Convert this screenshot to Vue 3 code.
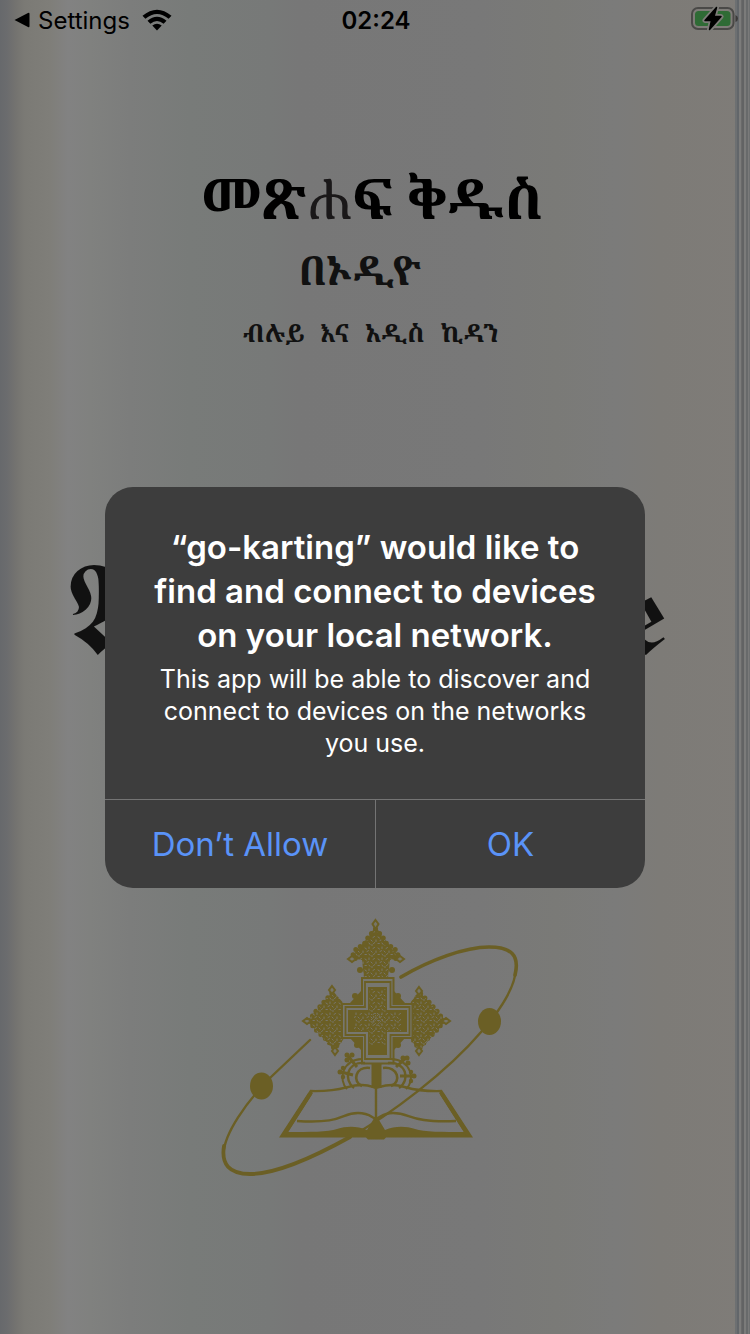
<script setup>
import { ref } from 'vue'

const open = ref(true)
</script>

<template>
  <div class="screen">
    <header class="status">
      <a class="back" href="#settings">
        <svg class="caret" viewBox="0 0 16 16" aria-hidden="true"><path d="M0.500 8 L14 1 Q15.500 0.300 15.500 2 V14 Q15.500 15.700 14 15 Z" /></svg>
        <span>Settings</span>
        <svg class="wifi" viewBox="0 0 30 22" aria-hidden="true">
          <path d="M0.500 6.800 Q15 -5.500 29.500 6.800 L26.600 9.800 Q15 0.300 3.400 9.800 Z" />
          <path d="M5.500 11.800 Q15 3.800 24.500 11.800 L21.600 14.800 Q15 9.300 8.400 14.800 Z" />
          <path d="M10.300 16.600 Q15 12.700 19.700 16.600 L15 21.500 Z" />
        </svg>
      </a>
      <time class="clock">02:24</time>
      <svg class="battery" viewBox="0 0 48 28" role="img" aria-label="Charging">
        <rect x="2" y="2" width="41.500" height="21" rx="6" fill="none" stroke="#4a4947" stroke-width="2" />
        <rect x="5" y="5" width="35.500" height="15" rx="3.500" fill="#2f6b35" />
        <path d="M45.500 9 Q48 10 48 12.500 Q48 15 45.500 16 Z" fill="#3c3b3a" />
        <path d="M26.500 1.500 L15 14.500 H21.500 L19.500 23.500 L31 10.500 H24 Z" fill="#000" stroke="#7d7c78" stroke-width="5" stroke-linejoin="round" />
        <path d="M26.500 1.500 L15 14.500 H21.500 L19.500 23.500 L31 10.500 H24 Z" fill="#000" stroke="#000" stroke-width="1.500" stroke-linejoin="round" />
      </svg>
    </header>

    <main class="cover">
      <h1 class="title">መጽ<span class="thin">ሐ</span>ፍ ቅዱስ</h1>
      <p class="subtitle">በኦዲዮ</p>
      <p class="testaments"><span>ብሉይ</span> <span>እና</span> <span>አዲስ</span> <span>ኪዳን</span></p>
      <p class="latin"><span class="initial">𝕬</span><span>𝖊</span></p>

      <svg class="emblem" viewBox="216 914 308 266" role="img" aria-label="Cross above an open book">
        <defs>
          <pattern id="lace" width="13" height="11" patternUnits="userSpaceOnUse">
            <rect width="13" height="11" fill="#6b5f25" />
            <path d="M1 2 l1.500 1 M5 1 v1.500 M9 2.500 l1.500 -1 M12 5 v1.500 M3 5.500 l1.500 -0.800 M7 5 l1.200 1.200 M1 8.500 h1.400 M5 8 l1 1.300 M9.500 8.500 l1.300 -1 M7.500 10 h1" fill="none" stroke="#77756a" stroke-width="1" stroke-linecap="round" />
          </pattern>
        </defs>

        <g fill="none" stroke="#6b5f25" stroke-linecap="round">
          <path d="M310 1040 L271 1077 C246 1102 224 1134 223.500 1154" stroke-width="2.400" />
          <path d="M224 1146 C221 1164 229 1174 250 1174 C277 1174 314 1157 350 1137" stroke-width="3.800" />
          <path d="M350 1137 C390 1115 447 1072 482 1031 C502 1008 515 986 516 969" stroke-width="2.400" />
          <path d="M515 975 C520 955 511 947 489 947 C465 947 430 960 401 977" stroke-width="3.600" />
        </g>
        <g fill="#6b5f25">
          <ellipse cx="261.500" cy="1086" rx="11.500" ry="13.500" />
          <ellipse cx="489.500" cy="1021.500" rx="11.500" ry="13.500" />

          <path d="M375.500 926 L382 936 L391 947 L401 958 L390 960 L388 978 H364 L362 960 L350 958 L360 947 L369 936 Z" fill="url(#lace)" />
          <g fill="none" stroke="#6b5f25" stroke-linecap="round">
            <path d="M375.500 929 L382 936 L388 946 L394 947 L399 957 L391 961 M375.500 929 L369 936 L363 946 L357 947 L352 957 L360 961" stroke-width="5" stroke-dasharray="0 6" />
            <path d="M309 1021 L316 1011 L325 1001 L332 993 L338 1002 L345 1007 M309 1021 L317 1031 L326 1039 L335 1049 L341 1038" stroke-width="5" stroke-dasharray="0 6" />
            <path d="M444 1021 L437 1011 L428 1001 L420 993 L414 1002 L409 1007 M444 1021 L436 1031 L427 1039 L419 1049 L412 1038" stroke-width="5" stroke-dasharray="0 6" />
          </g>
          <path d="M307 1021 L333 991 L345 1005 V1037 L335 1051 Z" fill="url(#lace)" />
          <path d="M446 1021 L419 991 L409 1005 V1037 L419 1051 Z" fill="url(#lace)" />
          <path d="M375.500 920 l3 4 l-3 5 l-3 -5 Z M348 959 l4 -3 l4 3 l-4 3 Z M404 959 l-4 -3 l-4 3 l4 3 Z M303 1021 l4 -3 l4 3 l-4 3 Z M450 1021 l-4 -3 l-4 3 l4 3 Z M332 986 l3 4 l-3 4 l-3 -4 Z M419 987 l3 4 l-3 4 l-3 -4 Z M335 1055 l3 -4 l-3 -4 l-3 4 Z M419 1055 l3 -4 l-3 -4 l-3 4 Z" fill="#77756a" stroke="#6b5f25" stroke-width="2" />
          <circle cx="360" cy="970" r="3" /><circle cx="392" cy="970" r="3" />
          <circle cx="355" cy="996" r="3" /><circle cx="398" cy="996" r="3" />
          <circle cx="357" cy="1045" r="3" /><circle cx="398" cy="1045" r="3" />
          <path d="M350 1003 L361 991 V1003 Z M405 1003 L394 991 V1003 Z M350 1038 H361 V1050 Z M405 1038 H394 V1050 Z" />

          <path d="M362 978 H393.500 V1004 H412.500 V1038 H393.500 V1063.500 H362 V1038 H342 V1004 H362 Z" fill="#777770" stroke="#6b5f25" stroke-width="2" />
          <path d="M365 982 H390.500 V1007 H409.500 V1035 H390.500 V1059 H365 V1035 H345.500 V1007 H365 Z" fill="none" stroke="#6b5f25" stroke-width="1.800" />
          <path d="M368 987 H387 V1010 H407 V1032 H387 V1055 H368 V1032 H348 V1010 H368 Z" />
          <path d="M369.500 989 H385.500 V1012 H401 V1031 H385.500 V1045 H369.500 V1031 H354 V1012 H369.500 Z" fill="url(#lace)" />
          <path d="M371 1014 l11 11 M375 1013 l8 8 M371 1019 l7 7 M382 1014 l-11 11 M378 1013 l-7 7 M383 1019 l-7 7" fill="none" stroke="#77756a" stroke-width="0.900" stroke-dasharray="1.500 1.500" />

          <rect x="371.500" y="1064" width="10" height="24" />
          <g fill="none" stroke="#6b5f25">
            <path d="M370 1068 C355 1066 352 1082 362 1086 M383 1068 C398 1066 402 1082 391 1086" stroke-width="2.600" />
            <path d="M365 1063 C347 1061 343 1080 354 1088 M388 1063 C406 1061 411 1080 399 1088" stroke-width="2.400" />
            <path d="M362 1059 C342 1060 338 1080 347 1089 M391 1059 C411 1060 416 1080 406 1089" stroke-width="2" />
            <path d="M357 1067 L348 1056 M353 1075 L341 1072 M396 1067 L406 1058 M400 1076 L413 1076" stroke-width="3" />
          </g>
          <circle cx="347" cy="1055" r="2.500" /><circle cx="352" cy="1055" r="2.500" /><circle cx="347" cy="1060" r="2.500" />
          <circle cx="340" cy="1072" r="2.500" /><circle cx="343" cy="1068" r="2.200" /><circle cx="343" cy="1077" r="2.200" />
          <circle cx="407" cy="1058" r="2.500" /><circle cx="403" cy="1058" r="2.500" /><circle cx="408" cy="1063" r="2.500" />
          <circle cx="414" cy="1076" r="2.500" /><circle cx="411" cy="1072" r="2.200" /><circle cx="411" cy="1081" r="2.200" />

          <path d="M310 1090 L313 1093 L288 1132 C310 1132 328 1132 337 1129 C347 1126 357 1126 367 1130 L376 1115 L385 1130 C395 1126 405 1126 415 1129 C424 1132 443 1132 464 1132 L439 1093 L442 1090 L473 1137.500 H386 L384 1139.500 H368 L366 1137.500 H279 Z" />
          <path d="M310 1094 L284 1135 M442 1094 L468 1135" stroke="#6b5f25" stroke-width="4" />
          <path d="M310 1091 C345 1092 345 1085 362 1085 C370 1085 372 1087 376 1088 C380 1087 384 1085 392 1085 C407 1085 407 1092 442 1091 M376 1087 V1118 M297 1121 C345 1124 340 1113 358 1113 C369 1113 371 1117 376 1119 C381 1117 383 1113 393 1113 C412 1113 408 1123 456 1121" fill="none" stroke="#6b5f25" stroke-width="2.400" />
        </g>
      </svg>
    </main>

    <div v-if="open" class="overlay">
      <section class="alert" role="alertdialog" aria-labelledby="alert-title" aria-describedby="alert-text">
        <div class="message">
          <h2 id="alert-title">“go-karting” would like to find and connect to devices on your local network.</h2>
          <p id="alert-text">This app will be able to discover and connect to devices on the networks you use.</p>
        </div>
        <div class="actions">
          <button type="button" @click="open = false">Don’t Allow</button>
          <button type="button" @click="open = false">OK</button>
        </div>
      </section>
    </div>
  </div>
</template>

<style>
body {
  margin: 0;
}
</style>

<style scoped>
.screen {
  position: relative;
  min-height: 100vh;
  box-sizing: border-box;
  font-family: Inter, "Liberation Sans", sans-serif;
  color: #000;
  background:
    linear-gradient(90deg, #6d7072 0 2px, #62666a 2px 4px, #7c7c7b 4px 6px, #6a6a6a 6px 7px, #626364 7px 9px, #7b7b7a 9px 11px, #686a6b 11px 13px, #7a7a7a 13px 14px, #6e7071 14px) right / 15px 100% no-repeat,
    linear-gradient(90deg, #67696c 0, #6b6c6e 7px, #747370 16px, #7b7a75 25px, #7f7e79 50px, #828282 68px, #80817f 90px, #7c7d7c 130px, #787b79 190px, #777978 270px, #777777 300px, #787878 64%, #7a7a77 74%, #7b7b7a 82%, #7d7b77 88%, #7f7c78 100%);
}

.status {
  display: grid;
  grid-template-columns: 1fr auto 1fr;
  align-items: center;
  height: 40px;
  padding: 0 12px 0 14px;
  font-size: 24px;
}

.back {
  display: flex;
  align-items: center;
  gap: 8px;
  color: inherit;
  text-decoration: none;
}

.caret {
  width: 16px;
  height: 16px;
}

.wifi {
  width: 30px;
  height: 22px;
  margin-left: 4px;
}

.clock {
  font-weight: 600;
}

.battery {
  justify-self: end;
  width: 48px;
  height: 28px;
}

.cover {
  display: flex;
  flex-direction: column;
  align-items: center;
  padding-top: 112px;
  font-family: "Noto Serif Ethiopic", "Noto Sans Ethiopic", "Abyssinica SIL", "Liberation Serif", serif;
  font-weight: 700;
  color: #111;
}

.title,
.subtitle,
.testaments,
.latin {
  margin: 0;
  white-space: nowrap;
}

.title {
  padding-right: 6px;
  font-size: 56px;
  line-height: 90px;
  color: #000;
}

.thin {
  font-weight: 400;
  color: #1a1819;
}

.subtitle {
  padding-right: 30px;
  font-size: 40px;
  line-height: 56px;
}

.testaments {
  display: flex;
  gap: 16px;
  padding-right: 8px;
  font-size: 25px;
  line-height: 68px;
}

.latin {
  display: flex;
  justify-content: space-between;
  align-items: baseline;
  align-self: stretch;
  height: 120px;
  margin-top: 178px;
  padding: 0 84px 0 64px;
  font-size: 110px;
  font-weight: 400;
  line-height: 120px;
}

.initial {
  font-size: 130px;
}

.emblem {
  width: 308px;
  height: 266px;
  margin-top: 250px;
  margin-right: 10px;
}

.overlay {
  position: absolute;
  inset: 40px 0 0;
  display: grid;
  place-items: center;
}

.alert {
  width: 540px;
  max-width: 90%;
  overflow: hidden;
  border-radius: 28px;
  background: #3d3d3d;
  color: #fff;
}

.message {
  padding: 38px 40px 40px;
  text-align: center;
}

.message h2 {
  margin: 0;
  font-size: 33px;
  font-weight: 600;
  line-height: 44px;
}

.message p {
  margin: 6px 0 0;
  font-size: 25px;
  line-height: 32px;
}

.actions {
  display: grid;
  grid-template-columns: 1fr 1fr;
  border-top: 1px solid #747474;
}

.actions button {
  height: 88px;
  padding: 0;
  border: 0;
  background: none;
  color: #5a93f8;
  font-family: inherit;
  font-size: 33px;
}

.actions button + button {
  border-left: 1px solid #747474;
}
</style>
